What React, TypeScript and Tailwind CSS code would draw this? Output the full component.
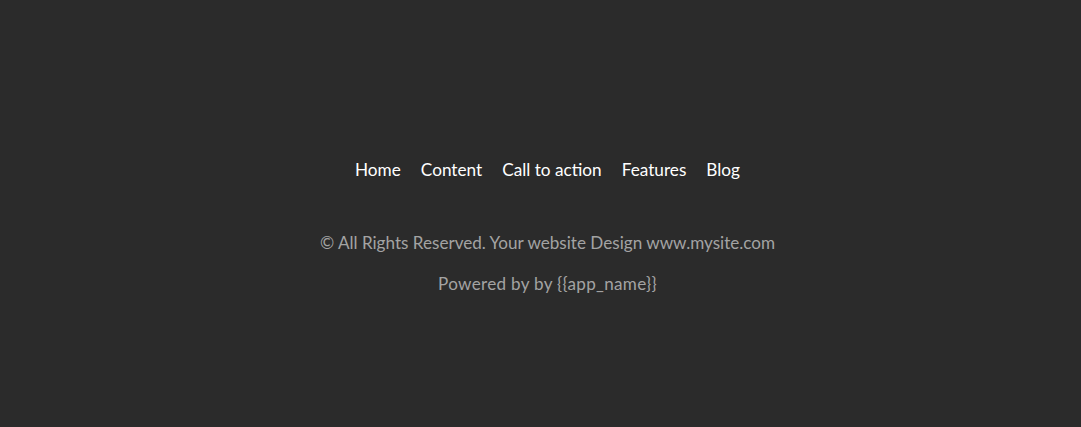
export default function App() {
  const links = ["Home", "Content", "Call to action", "Features", "Blog"];
  return (
    <div
      className="h-[427px] w-full bg-[#2b2b2b] flex flex-col items-center pt-[158px] pl-[14px]"
      style={{ fontFamily: "Lato, 'Open Sans', sans-serif" }}
    >
      <nav className="flex items-center gap-[20px] text-[17.2px] leading-[24px] text-white">
        {links.map((l) => (
          <a key={l} href="#" className="text-white">
            {l}
          </a>
        ))}
      </nav>
      <p className="mt-[49px] text-[17.1px] leading-[24px] text-[#a3a3a3]">
        © All Rights Reserved. Your website Design www.mysite.com
      </p>
      <p className="mt-[17px] text-[17.1px] leading-[24px] text-[#a3a3a3] tracking-[0.3px]">
        Powered by by {"{{app_name}}"}
      </p>
    </div>
  );
}
